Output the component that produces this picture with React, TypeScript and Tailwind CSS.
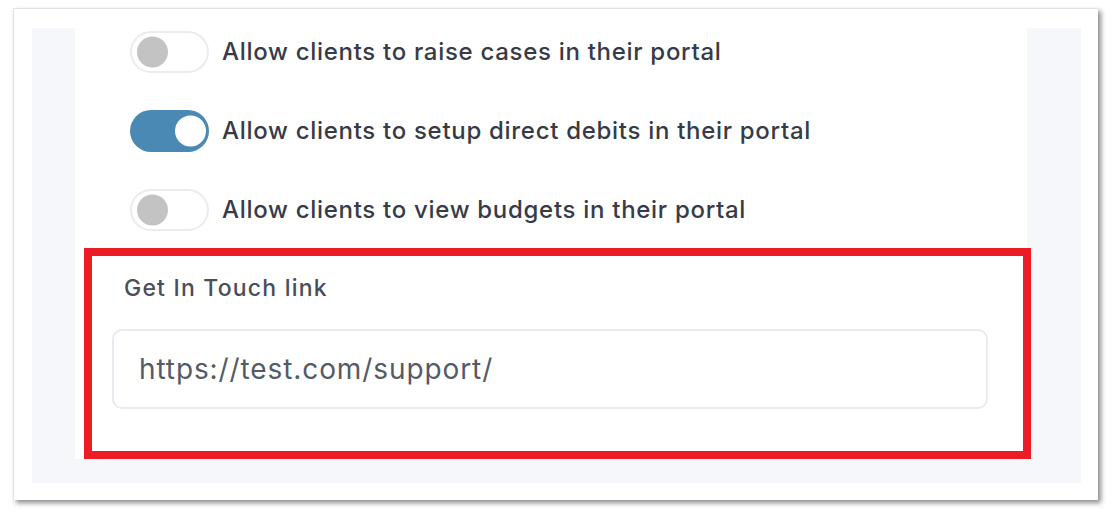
import { useState } from 'react'

interface ToggleRowProps {
  label: string
  defaultOn?: boolean
}

function ToggleRow({ label, defaultOn = false }: ToggleRowProps) {
  const [on, setOn] = useState(defaultOn)

  return (
    <div className="flex items-center h-[42px]">
      <button
        type="button"
        onClick={() => setOn(!on)}
        className={`relative w-[79px] h-[42px] rounded-full shrink-0 ${
          on ? 'bg-[#4a89b4]' : 'bg-white border-2 border-[#ebebf0]'
        }`}
      >
        <span
          className={`absolute top-1/2 -translate-y-1/2 w-[31px] h-[31px] rounded-full ${
            on ? 'left-[45px] bg-white' : 'left-[5px] bg-[#c3c3c3]'
          }`}
        />
      </button>
      <span className="ml-[13px] text-[24px] tracking-[0.7px] font-medium text-[#373b47] whitespace-nowrap">
        {label}
      </span>
    </div>
  )
}

export default function App() {
  return (
    <div
      className="min-h-screen bg-white pl-[13px] pt-[8px]"
      style={{ fontFamily: 'Inter, "Noto Sans", sans-serif' }}
    >
      {/* Screenshot frame */}
      <div className="w-[1085px] h-[492px] bg-white border-t border-l border-[#e2e2e2] shadow-[3px_3px_5px_rgba(0,0,0,0.45)] pt-[19px] pl-[18px] pr-[17px] pb-[17px]">
        <div className="flex h-full bg-[#f5f7fa]">
          <div className="w-[43px] shrink-0" />

          {/* Settings card */}
          <div className="w-[952px] self-start bg-white">
            <div className="flex flex-col gap-[37px] pt-[3px] pl-[55px]">
              <ToggleRow label="Allow clients to raise cases in their portal" />
              <ToggleRow label="Allow clients to setup direct debits in their portal" defaultOn />
              <ToggleRow label="Allow clients to view budgets in their portal" />
            </div>

            {/* Get In Touch link */}
            <div className="mt-[17px] ml-[9px] -mr-[4px] border-[8px] border-[#ec1c24] pt-[18px] pl-[20px] pr-[35px] pb-[42px]">
              <label className="block pl-[12px] text-[23px] tracking-[1.2px] font-medium text-[#4a4e59] leading-[28px]">
                Get In Touch link
              </label>
              <input
                type="text"
                defaultValue="https://test.com/support/"
                className="mt-[27px] w-full h-[80px] rounded-[10px] border-2 border-[#e9eaf2] px-[25px] text-[28px] tracking-[0.9px] text-[#545a66] outline-none"
              />
            </div>
          </div>

          <div className="flex-1" />
        </div>
      </div>
    </div>
  )
}
